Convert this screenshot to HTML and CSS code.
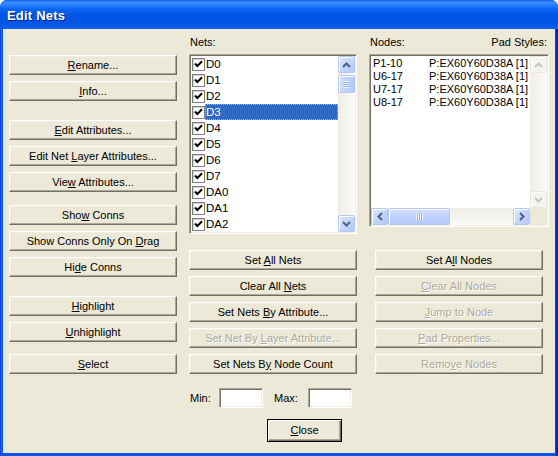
FILE: index.html
```html
<!DOCTYPE html>
<html>
<head>
<meta charset="utf-8">
<title>Edit Nets</title>
<link rel="stylesheet" href="styles.css">
</head>
<body>
<div class="window">
  <div class="titlebar"><span class="title">Edit Nets</span></div>
  <div class="client">
    <div class="leftcol">
      <div class="group">
        <div class="btn"><span><u>R</u>ename...</span></div>
        <div class="btn"><span><u>I</u>nfo...</span></div>
      </div>
      <div class="group g-attr">
        <div class="btn"><span><u>E</u>dit Attributes...</span></div>
        <div class="btn"><span>Edit Net <u>L</u>ayer Attributes...</span></div>
        <div class="btn"><span>Vie<u>w</u> Attributes...</span></div>
      </div>
      <div class="group g-conns">
        <div class="btn"><span>Sho<u>w</u> Conns</span></div>
        <div class="btn"><span>Show Conns Only On <u>D</u>rag</span></div>
        <div class="btn"><span>Hi<u>d</u>e Conns</span></div>
      </div>
      <div class="group g-high">
        <div class="btn"><span><u>H</u>ighlight</span></div>
        <div class="btn"><span><u>U</u>nhighlight</span></div>
      </div>
      <div class="group g-sel">
        <div class="btn"><span><u>S</u>elect</span></div>
      </div>
    </div>

    <div class="main">
      <div class="panels">
        <div class="netpanel">
          <div class="label">Nets:</div>
          <div class="listbox nets">
            <div class="items">
              <div class="item"><span class="chk"><svg width="11" height="11" viewBox="0 0 11 11"><path d="M2 4.5 L4.3 7 L9 2.3" stroke="#000" stroke-width="2" fill="none"/></svg></span><span class="txt">D0</span></div>
              <div class="item"><span class="chk"><svg width="11" height="11" viewBox="0 0 11 11"><path d="M2 4.5 L4.3 7 L9 2.3" stroke="#000" stroke-width="2" fill="none"/></svg></span><span class="txt">D1</span></div>
              <div class="item"><span class="chk"><svg width="11" height="11" viewBox="0 0 11 11"><path d="M2 4.5 L4.3 7 L9 2.3" stroke="#000" stroke-width="2" fill="none"/></svg></span><span class="txt">D2</span></div>
              <div class="item sel"><span class="chk"><svg width="11" height="11" viewBox="0 0 11 11"><path d="M2 4.5 L4.3 7 L9 2.3" stroke="#000" stroke-width="2" fill="none"/></svg></span><span class="txt">D3</span></div>
              <div class="item"><span class="chk"><svg width="11" height="11" viewBox="0 0 11 11"><path d="M2 4.5 L4.3 7 L9 2.3" stroke="#000" stroke-width="2" fill="none"/></svg></span><span class="txt">D4</span></div>
              <div class="item"><span class="chk"><svg width="11" height="11" viewBox="0 0 11 11"><path d="M2 4.5 L4.3 7 L9 2.3" stroke="#000" stroke-width="2" fill="none"/></svg></span><span class="txt">D5</span></div>
              <div class="item"><span class="chk"><svg width="11" height="11" viewBox="0 0 11 11"><path d="M2 4.5 L4.3 7 L9 2.3" stroke="#000" stroke-width="2" fill="none"/></svg></span><span class="txt">D6</span></div>
              <div class="item"><span class="chk"><svg width="11" height="11" viewBox="0 0 11 11"><path d="M2 4.5 L4.3 7 L9 2.3" stroke="#000" stroke-width="2" fill="none"/></svg></span><span class="txt">D7</span></div>
              <div class="item"><span class="chk"><svg width="11" height="11" viewBox="0 0 11 11"><path d="M2 4.5 L4.3 7 L9 2.3" stroke="#000" stroke-width="2" fill="none"/></svg></span><span class="txt">DA0</span></div>
              <div class="item"><span class="chk"><svg width="11" height="11" viewBox="0 0 11 11"><path d="M2 4.5 L4.3 7 L9 2.3" stroke="#000" stroke-width="2" fill="none"/></svg></span><span class="txt">DA1</span></div>
              <div class="item"><span class="chk"><svg width="11" height="11" viewBox="0 0 11 11"><path d="M2 4.5 L4.3 7 L9 2.3" stroke="#000" stroke-width="2" fill="none"/></svg></span><span class="txt">DA2</span></div>
            </div>
            <div class="vscroll">
              <div class="sbtn"><svg width="9" height="6" viewBox="0 0 9 6"><path d="M1 5 L4.5 1.5 L8 5" stroke="#4D6185" stroke-width="2" fill="none"/></svg></div>
              <div class="thumb vthumb"><span class="grip-v"></span></div>
              <div class="track"></div>
              <div class="sbtn"><svg width="9" height="6" viewBox="0 0 9 6"><path d="M1 1 L4.5 4.5 L8 1" stroke="#4D6185" stroke-width="2" fill="none"/></svg></div>
            </div>
          </div>
        </div>

        <div class="nodepanel">
          <div class="label two"><span>Nodes:</span><span>Pad Styles:</span></div>
          <div class="listbox nodes">
            <div class="nodeitems">
              <div class="node"><span class="nname">P1-10</span><span>P:EX60Y60D38A [1]</span></div>
              <div class="node"><span class="nname">U6-17</span><span>P:EX60Y60D38A [1]</span></div>
              <div class="node"><span class="nname">U7-17</span><span>P:EX60Y60D38A [1]</span></div>
              <div class="node"><span class="nname">U8-17</span><span>P:EX60Y60D38A [1]</span></div>
            </div>
            <div class="vscroll off">
              <div class="sbtn dis"><svg width="9" height="6" viewBox="0 0 9 6"><path d="M1 5 L4.5 1.5 L8 5" stroke="#C9C7BA" stroke-width="2" fill="none"/></svg></div>
              <div class="track"></div>
              <div class="sbtn dis"><svg width="9" height="6" viewBox="0 0 9 6"><path d="M1 1 L4.5 4.5 L8 1" stroke="#C9C7BA" stroke-width="2" fill="none"/></svg></div>
            </div>
            <div class="hscroll">
              <div class="sbtn"><svg width="6" height="9" viewBox="0 0 6 9"><path d="M5 1 L1.5 4.5 L5 8" stroke="#4D6185" stroke-width="2" fill="none"/></svg></div>
              <div class="thumb hthumb"><span class="grip-h"></span></div>
              <div class="htrack"></div>
              <div class="sbtn"><svg width="6" height="9" viewBox="0 0 6 9"><path d="M1 1 L4.5 4.5 L1 8" stroke="#4D6185" stroke-width="2" fill="none"/></svg></div>
            </div>
            <div class="corner"></div>
          </div>
        </div>
      </div>

      <div class="btngrid">
        <div class="btn"><span>Set <u>A</u>ll Nets</span></div>
        <div class="btn"><span>Set A<u>l</u>l Nodes</span></div>
        <div class="btn"><span>Clear All <u>N</u>ets</span></div>
        <div class="btn disabled"><span><u>C</u>lear All Nodes</span></div>
        <div class="btn"><span>Set Nets <u>B</u>y Attribute...</span></div>
        <div class="btn disabled"><span><u>J</u>ump to Node</span></div>
        <div class="btn disabled"><span>Set Net By <u>L</u>ayer Attribute...</span></div>
        <div class="btn disabled"><span><u>P</u>ad Properties...</span></div>
        <div class="btn"><span>Set Nets B<u>y</u> Node Count</span></div>
        <div class="btn disabled"><span>Remo<u>v</u>e Nodes</span></div>
      </div>

      <div class="minmax">
        <span class="mlabel">Min:</span>
        <span class="field"></span>
        <span class="mlabel maxl">Max:</span>
        <span class="field"></span>
      </div>

      <div class="closerow">
        <div class="btn default"><span><u>C</u>lose</span></div>
      </div>
    </div>
  </div>
</div>
</body>
</html>
```

FILE: styles.css
```css
* { box-sizing: border-box; }
html, body { margin: 0; padding: 0; }
body {
  width: 558px;
  height: 456px;
  overflow: hidden;
  background: #ffffff;
  font-family: "Liberation Sans", Arial, sans-serif;
  font-size: 11px;
  color: #000;
}

.window {
  width: 558px;
  height: 456px;
  display: flex;
  flex-direction: column;
  border-radius: 7px 7px 0 0;
  overflow: hidden;
  background: linear-gradient(to right, #0831D9 0, #1C62EC 1px, #0D52E3 3px, #0D52E3 555px, #0036C8 556px, #001FA8 558px);
}

.titlebar {
  height: 29px;
  flex: none;
  display: flex;
  align-items: center;
  padding: 1px 0 0 7px;
  background: linear-gradient(to bottom, #0A5AE8 0px, #3D8DFF 2px, #2A7FFB 5px, #0B66F2 9px, #0058E6 14px, #0054E2 20px, #0558E8 25px, #0D60F0 29px);
}
.title {
  color: #fff;
  font-weight: bold;
  font-size: 13px;
  letter-spacing: 0.2px;
  text-shadow: 1px 1px 0 #0A1E8C;
}

.client {
  flex: 1;
  margin: 0 3px 3px 3px;
  background: #ECE9D8;
  display: flex;
  padding-left: 6px;
}

/* ---------- buttons ---------- */
.btn {
  height: 20px;
  display: flex;
  align-items: center;
  justify-content: center;
  background: #ECE9D8;
  border: 1px solid;
  border-color: #FFFFFF #716F64 #716F64 #FFFFFF;
  box-shadow: inset -1px -1px 0 #ACA899, inset 1px 1px 0 #F1EFE2;
  white-space: nowrap;
  padding-bottom: 1px;
}
.btn.disabled {
  color: #ACA899;
  text-shadow: 1px 1px 0 #FFFFFF;
}
.btn.default {
  border: 1px solid #000;
  box-shadow: inset 1px 1px 0 #FFFFFF, inset -1px -1px 0 #716F64, inset -2px -2px 0 #ACA899;
}

/* ---------- left column ---------- */
.leftcol {
  width: 168px;
  flex: none;
  padding-top: 26px;
  display: flex;
  flex-direction: column;
}
.group {
  display: flex;
  flex-direction: column;
  gap: 6px;
}
.g-attr { margin-top: 19px; }
.g-conns { margin-top: 13px; }
.g-high { margin-top: 19px; }
.g-sel { margin-top: 12px; }

/* ---------- main area ---------- */
.main {
  margin-left: 12px;
  width: 360px;
  display: flex;
  flex-direction: column;
}
.panels {
  display: flex;
  padding-top: 7px;
}
.netpanel { width: 168px; }
.nodepanel { width: 180px; margin-left: 12px; }

.label {
  height: 18px;
  line-height: 13px;
  padding: 0 2px 0 1px;
}
.label.two {
  display: flex;
  justify-content: space-between;
}

.listbox {
  background: #fff;
  border: 1px solid;
  border-color: #ACA899 #FFFFFF #FFFFFF #ACA899;
  box-shadow: inset 1px 1px 0 #716F64, inset -1px -1px 0 #F1EFE2;
  padding: 1px;
}
.listbox.nets {
  height: 180px;
  display: grid;
  grid-template-columns: 1fr 17px;
}
.listbox.nodes {
  height: 173px;
  display: grid;
  grid-template-columns: 1fr 17px;
  grid-template-rows: 1fr 17px;
}

.items { overflow: hidden; }
.item {
  height: 16px;
  display: flex;
  align-items: center;
}
.chk {
  width: 13px;
  height: 13px;
  flex: none;
  margin-left: 1px;
  border: 1px solid #808080;
  box-shadow: inset 1px 1px 0 #D4D0C8;
  background: #fff;
  display: flex;
  align-items: center;
  justify-content: center;
}
.chk svg { display: block; }
.txt {
  flex: 1;
  height: 16px;
  line-height: 16px;
  padding-left: 1px;
  font-size: 11.5px;
}
.item.sel .txt {
  background: #316AC5;
  color: #fff;
  outline: 1px dotted #E9B040;
  outline-offset: -1px;
}

/* ---------- scrollbars ---------- */
.vscroll {
  display: flex;
  flex-direction: column;
  background: linear-gradient(to right, #EEEDE5, #FBFBF8);
}
.track { flex: 1; }
.sbtn {
  width: 17px;
  height: 17px;
  flex: none;
  border: 1px solid #B4C8F6;
  border-radius: 2px;
  background: linear-gradient(135deg, #E0E9FE 0%, #C4D5FC 50%, #B4C9F8 100%);
  box-shadow: inset 1px 1px 0 #FFFFFF;
  display: flex;
  align-items: center;
  justify-content: center;
}
.sbtn svg { display: block; }
.sbtn.dis {
  border-color: #E8E6DC;
  background: #F5F4EE;
  box-shadow: inset 1px 1px 0 #FFFFFF;
}
.thumb {
  border: 1px solid #B4C8F6;
  border-radius: 2px;
  background: linear-gradient(to right, #D4E0FD, #C0D2FB, #B4C9F8);
  box-shadow: inset 1px 1px 0 #FFFFFF;
  display: flex;
  align-items: center;
  justify-content: center;
}
.vthumb {
  height: 18px;
  margin-top: 2px;
}
.grip-v {
  width: 7px;
  height: 7px;
  background: repeating-linear-gradient(to bottom, #EEF4FE 0, #EEF4FE 1px, #8CB0F8 1px, #8CB0F8 2px);
}
.hscroll {
  display: flex;
  background: linear-gradient(to bottom, #EEEDE5, #FBFBF8);
}
.hthumb {
  width: 62px;
  height: 17px;
  margin-left: 0;
  background: linear-gradient(to bottom, #D4E0FD, #C0D2FB, #B4C9F8);
}
.grip-h {
  width: 7px;
  height: 7px;
  background: repeating-linear-gradient(to right, #EEF4FE 0, #EEF4FE 1px, #8CB0F8 1px, #8CB0F8 2px);
}
.htrack { flex: 1; }
.corner { background: #ECE9D8; }

.nodeitems {
  padding-top: 1px;
  padding-left: 2px;
  overflow: hidden;
}
.node {
  height: 13px;
  line-height: 13px;
  display: flex;
  white-space: nowrap;
}
.nname { width: 56px; flex: none; }

/* ---------- bottom ---------- */
.btngrid {
  margin-top: 16px;
  display: grid;
  grid-template-columns: 168px 168px;
  grid-auto-rows: 20px;
  column-gap: 18px;
  row-gap: 6px;
}
.minmax {
  margin-top: 14px;
  display: flex;
  align-items: center;
  height: 20px;
}
.mlabel {
  width: 30px;
  padding-left: 1px;
}
.maxl {
  width: 35px;
  margin-left: 10px;
}
.field {
  width: 44px;
  height: 20px;
  background: #fff;
  border: 1px solid;
  border-color: #ACA899 #FFFFFF #FFFFFF #ACA899;
  box-shadow: inset 1px 1px 0 #716F64, inset -1px -1px 0 #F1EFE2;
}
.closerow {
  margin-top: 11px;
  padding-left: 78px;
}
.closerow .btn {
  width: 75px;
  height: 23px;
}
```
